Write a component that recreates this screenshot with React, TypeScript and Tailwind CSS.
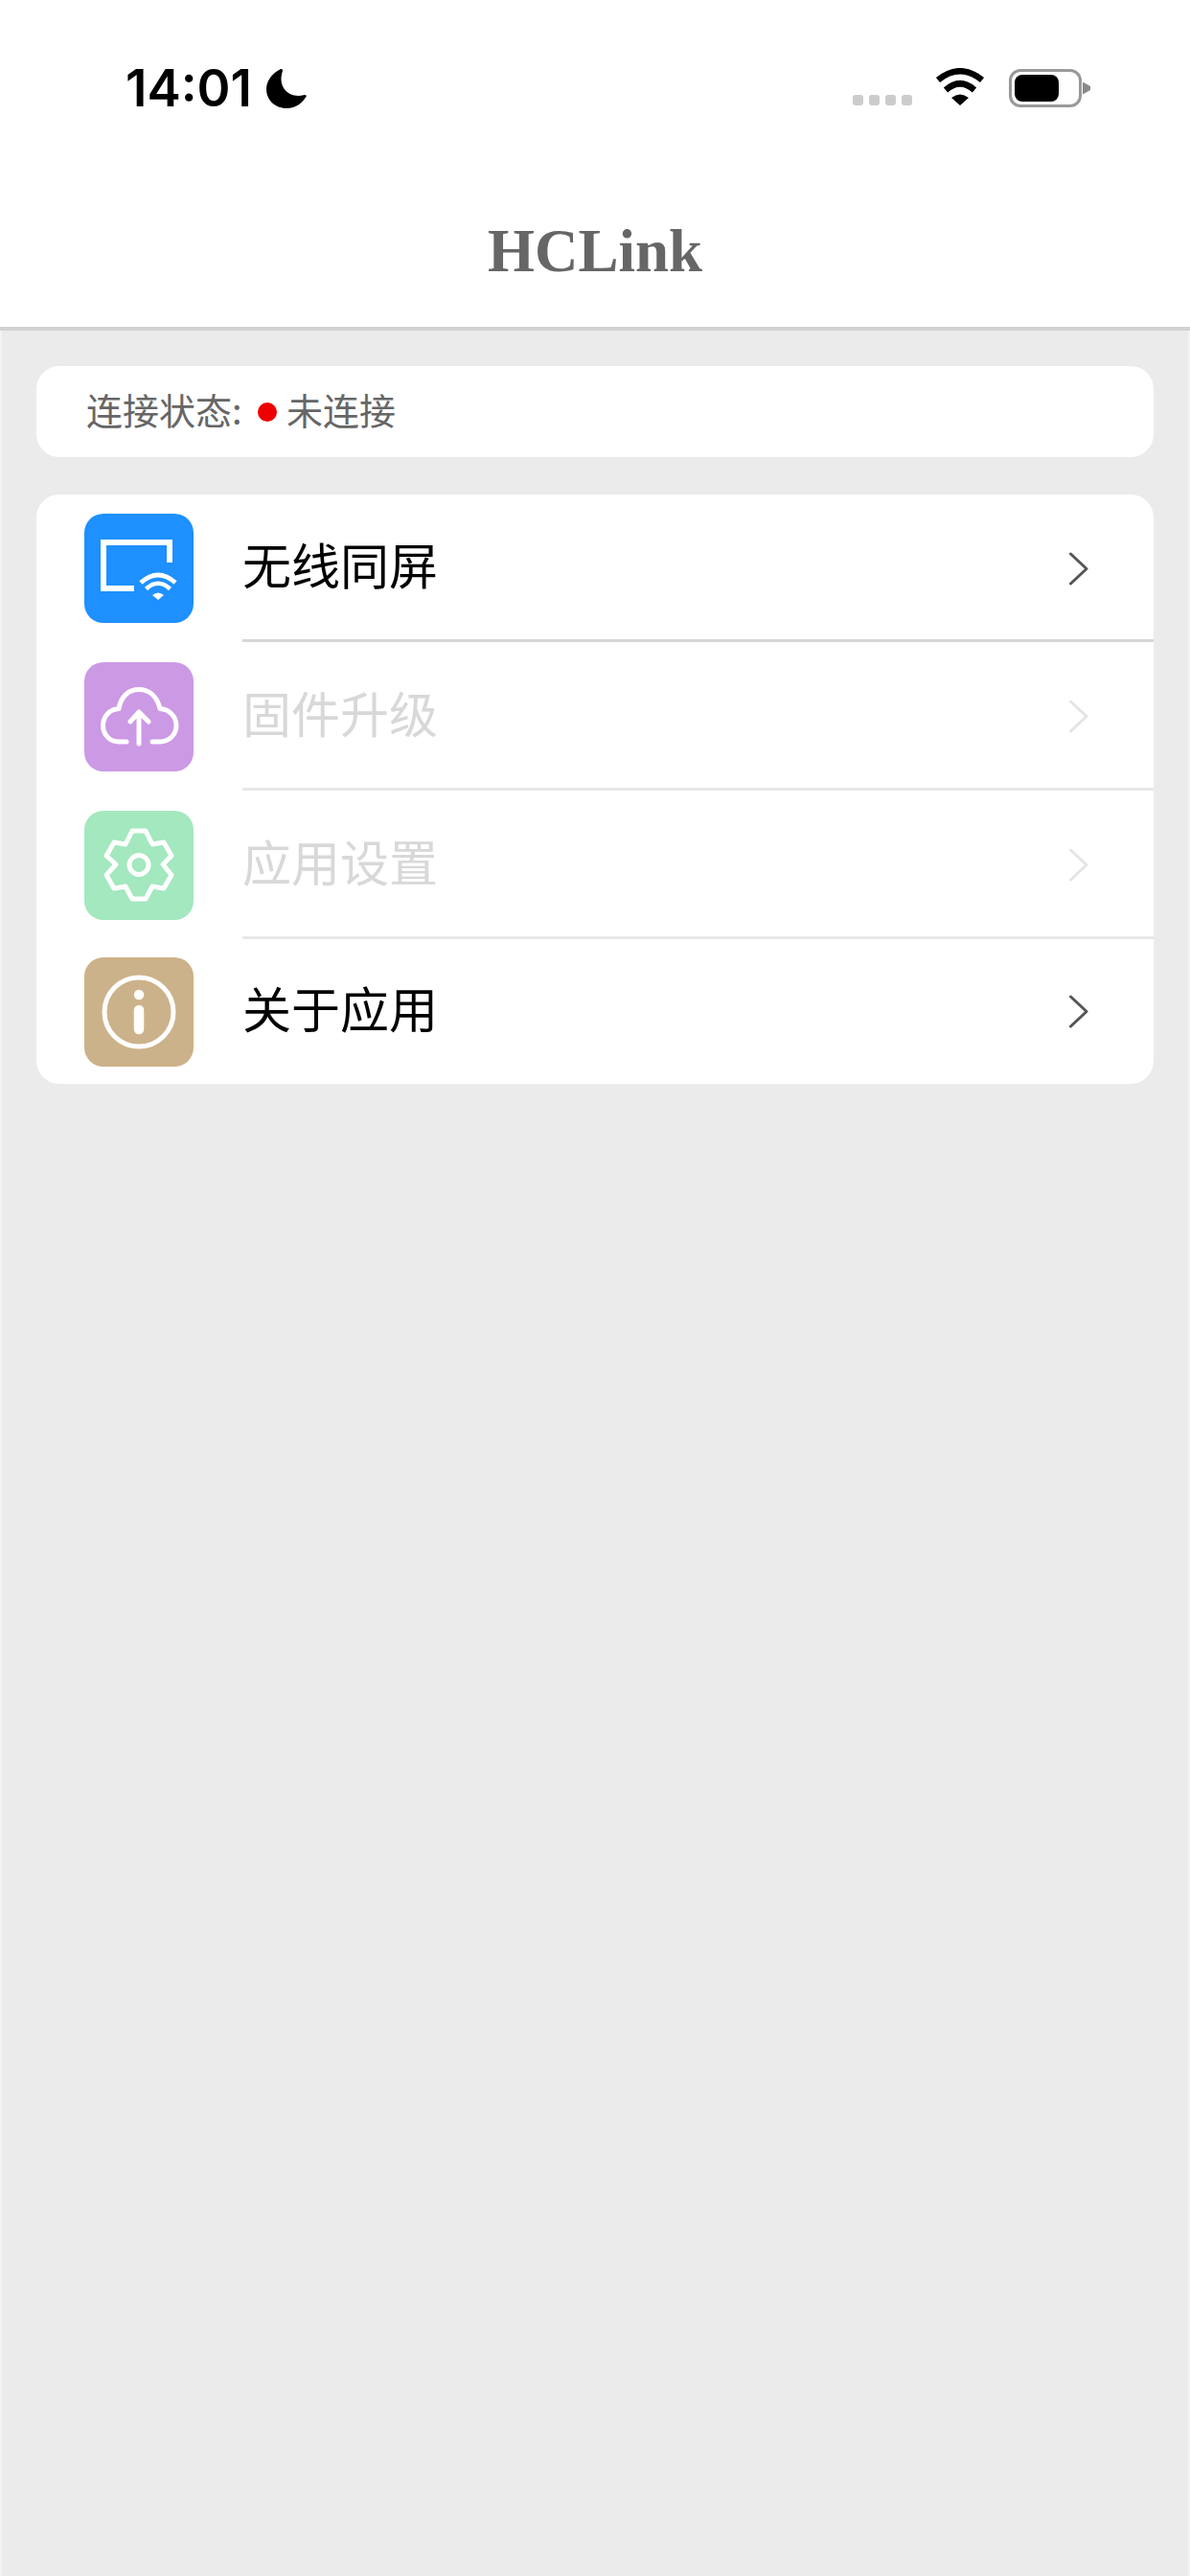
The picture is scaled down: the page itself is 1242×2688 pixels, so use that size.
const cjk = "font-['Noto_Sans_CJK_SC',sans-serif]";

const ScreenIcon = () => (
  <svg viewBox="0 0 114 114" className="size-full" fill="none" stroke="#fff">
    <path d="M52 78H20V30H89V51" strokeWidth="6" />
    <path d="M59 72Q77 56 95 72" strokeWidth="5" />
    <path d="M64.5 78.5Q77 67 89.5 78.5" strokeWidth="4.5" />
    <path d="M71 85Q77 80 83 85L77 90Z" fill="#fff" stroke="none" />
  </svg>
);

const CloudIcon = () => (
  <svg viewBox="0 0 114 114" className="size-full" fill="none" stroke="#fff" strokeWidth="5" strokeLinecap="round" strokeLinejoin="round">
    <path d="M44 83H36C26 83 19.5 75 19.5 66C19.5 56 27 49 36 48.5C38 36 46 28.5 57 28.5C68 28.5 76 36 79 48.5C88 49 96 56 96 66C96 76 88 83 79 83H71" />
    <path d="M57 85V52M48 62L57 52L67 62" />
  </svg>
);

const GearIcon = () => (
  <svg viewBox="0 0 114 114" className="size-full" fill="none" stroke="#fff" strokeWidth="5" strokeLinejoin="round">
    <path d="M50 21H64L71 35L83 33L91 47L82 56L91 67L83 81L71 79L64 92H50L43 79L31 81L23 67L33 56L23 47L31 33L43 35Z" />
    <circle cx="57" cy="56.5" r="10" />
  </svg>
);

const InfoIcon = () => (
  <svg viewBox="0 0 114 114" className="size-full" fill="none" stroke="#fff">
    <circle cx="57" cy="57" r="36" strokeWidth="5" />
    <circle cx="57" cy="39" r="5.2" fill="#fff" stroke="none" />
    <path d="M57 55V75" strokeWidth="10.5" strokeLinecap="round" />
  </svg>
);

const rows = [
  { label: '无线同屏', icon: <ScreenIcon />, bg: 'bg-[#1e90ff]', text: 'text-black', height: 'h-[154px]', line: 'border-[#d6d6d6]', chevron: '#555555' },
  { label: '固件升级', icon: <CloudIcon />, bg: 'bg-[#cc99e5]', text: 'text-[#d8d8d8]', height: 'h-[155px]', line: 'border-[#e8e8e8]', chevron: '#e4e4e4' },
  { label: '应用设置', icon: <GearIcon />, bg: 'bg-[#a3e8be]', text: 'text-[#d8d8d8]', height: 'h-[155px]', line: 'border-[#e8e8e8]', chevron: '#e4e4e4' },
  { label: '关于应用', icon: <InfoIcon />, bg: 'bg-[#ccb28a]', text: 'text-black', height: 'h-[151px]', line: 'border-transparent', chevron: '#555555' },
];

const Chevron = ({ color }: { color: string }) => (
  <svg className="mt-[3px]" width="20" height="35" viewBox="0 0 20 35" fill="none" stroke={color} strokeWidth="3" strokeLinecap="round" strokeLinejoin="round">
    <path d="M1.5 2L18 17.5L1.5 33" />
  </svg>
);

export default function App() {
  return (
    <div className="min-h-[2688px] bg-[#ebebeb]">
      {/* status bar + title */}
      <header className="h-[345px] bg-white border-b-[4px] border-[#d2d2d2]">
        <div className="h-[225px] pt-[70px] pl-[131px] pr-[104px] flex items-start justify-between">
          <div className="flex items-center gap-[15px] h-[44px]">
            <span className="font-['Inter',sans-serif] font-semibold text-[53px] leading-[44px] text-black">14:01</span>
            <svg width="42" height="41" viewBox="0 0 42 41" fill="#000">
              <path d="M15 0C5 5 0 13 0 21C0 32 9 41 21 41C31 41 38 35 42 28C40 26 38 28 34 28C20 28 12 16 17 2C17 0 16 0 15 0Z" />
            </svg>
          </div>
          <div className="flex items-end h-[42px]">
            <div className="flex gap-[6px] mb-[2px]">
              <i className="size-[11px] rounded-[3px] bg-[#cccccc]" />
              <i className="size-[11px] rounded-[3px] bg-[#cccccc]" />
              <i className="size-[11px] rounded-[3px] bg-[#cccccc]" />
              <i className="size-[11px] rounded-[3px] bg-[#cccccc]" />
            </div>
            <svg className="ml-[24px] mb-[2px]" width="52" height="39" viewBox="0 0 52 39" fill="none" stroke="#000" strokeWidth="6.5">
              <path d="M3 12.5Q26 -6 49 12.5" />
              <path d="M11 23Q26 9.5 41 23" />
              <path d="M17 31Q26 24 35 31L26 39Z" fill="#000" stroke="none" />
            </svg>
            <div className="ml-[25px] flex items-center">
              <div className="w-[76px] h-[40px] rounded-[12px] border-[3px] border-[#999999] p-[3px] pr-[21px]">
                <div className="size-full rounded-[8px] bg-black" />
              </div>
              <div className="ml-[1px] w-[8px] h-[13px] bg-[#888888] [clip-path:polygon(0_0,100%_35%,100%_65%,0_100%)]" />
            </div>
          </div>
        </div>
        <h1 className="text-center font-['Liberation_Serif',serif] font-bold text-[63px] leading-[74px] text-[#666666]">HCLink</h1>
      </header>

      <main className="px-[38px] pt-[37px] min-h-[2343px] border-x-2 border-[#f3f3f3]">
        <div className={`${cjk} -mx-[2px] h-[95px] rounded-[24px] bg-white pl-[52px] flex items-center text-[38px] leading-none text-[#666666]`}>
          <span className="w-[179px] pb-[5px]">连接状态:</span>
          <span className="size-[20px] rounded-full bg-[#ee0000]" />
          <span className="ml-[10px] pb-[5px]">未连接</span>
        </div>

        <div className={`${cjk} -mx-[2px] mt-[39px] rounded-[24px] bg-white overflow-hidden`}>
          {rows.map((row) => (
            <div key={row.label} className={`flex items-center pl-[50px] ${row.height}`}>
              <div className={`size-[114px] rounded-[20px] shrink-0 ${row.bg}`}>{row.icon}</div>
              <div className={`ml-[51px] h-full flex-1 flex items-center justify-between pr-[68px] border-b-[3px] ${row.line}`}>
                <span className={`text-[51px] leading-none pb-[6px] ${row.text}`}>{row.label}</span>
                <Chevron color={row.chevron} />
              </div>
            </div>
          ))}
        </div>
      </main>
    </div>
  );
}
